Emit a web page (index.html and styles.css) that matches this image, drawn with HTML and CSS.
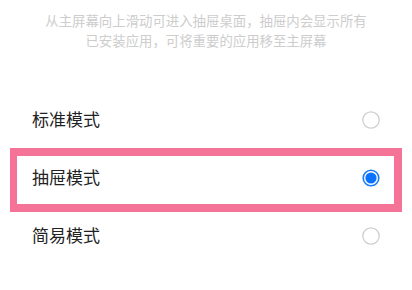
FILE: index.html
```html
<!DOCTYPE html>
<html lang="zh-CN">
<head>
    <meta charset="UTF-8">
    <meta name="viewport" content="width=device-width, initial-scale=1.0">
    <title>桌面模式</title>
    <link rel="stylesheet" href="styles.css">
</head>
<body>
    <p class="desc">从主屏幕向上滑动可进入抽屉桌面，抽屉内会显示所有<br>已安装应用，可将重要的应用移至主屏幕</p>

    <div class="mode-list">
        <div class="mode-row">
            <span class="mode-name">标准模式</span>
            <svg class="radio" width="18" height="18" viewBox="0 0 18 18"><circle cx="9" cy="9" r="8.2" fill="none" stroke="#cfcfcf" stroke-width="1.3"/></svg>
        </div>
        <div class="mode-row selected">
            <span class="mode-name">抽屉模式</span>
            <svg class="radio" width="18" height="18" viewBox="0 0 18 18"><circle cx="9" cy="9" r="7.8" fill="none" stroke="#1a7cf5" stroke-width="1.6"/><circle cx="9" cy="9" r="5.6" fill="#0a72ff"/></svg>
        </div>
        <div class="mode-row">
            <span class="mode-name">简易模式</span>
            <svg class="radio" width="18" height="18" viewBox="0 0 18 18"><circle cx="9" cy="9" r="8.2" fill="none" stroke="#cfcfcf" stroke-width="1.3"/></svg>
        </div>
    </div>
</body>
</html>
```

FILE: styles.css
```css
body {
    margin: 0;
    background: #ffffff;
    font-family: "Noto Sans CJK SC", "Noto Sans", sans-serif;
}
.desc {
    margin: 0;
    padding-top: 10px;
    text-align: center;
    font-size: 13.4px;
    line-height: 20px;
    color: #cdcdcd;
}
.mode-list {
    margin-top: 41px;
}
.mode-row {
    position: relative;
    height: 58px;
    padding: 0 32px;
    display: flex;
    align-items: center;
    justify-content: space-between;
}
.mode-name {
    font-size: 17px;
    color: #222222;
    margin-top: -4px;
}
.radio {
    display: block;
}
.mode-row.selected::after {
    content: "";
    position: absolute;
    top: -1px;
    bottom: -5px;
    left: 10px;
    right: 10px;
    border: 8px solid #f47397;
    border-left-width: 7px;
}
```
